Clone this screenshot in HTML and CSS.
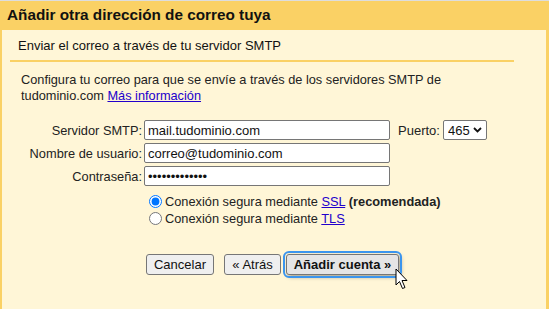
FILE: index.html
```html
<!DOCTYPE html>
<html lang="es">
<head>
  <meta charset="UTF-8" />
  <title>Añadir otra dirección de correo tuya</title>
  <link rel="stylesheet" href="styles.css">
</head>
<body>
  <div class="dialog">
    <h1>Añadir otra dirección de correo tuya</h1>

    <div class="panel">
      <div class="step">Enviar el correo a través de tu servidor SMTP</div>

      <div class="content">
        <p class="intro">
          Configura tu correo para que se envíe a través de los servidores SMTP de
          tudominio.com <a href="#">Más información</a>
        </p>

        <div class="form">
          <label for="server">Servidor SMTP:</label>
          <div class="field">
            <input type="text" id="server" value="mail.tudominio.com" />
            <label for="port" class="port-label">Puerto:</label>
            <span class="select-wrap">
              <select id="port">
                <option>465</option>
                <option>587</option>
                <option>25</option>
              </select>
              <svg class="chevron" width="9" height="6" viewBox="0 0 9 6">
                <path d="M1 1 L4.5 4.5 L8 1" fill="none" stroke="#111" stroke-width="1.8" />
              </svg>
            </span>
          </div>

          <label for="user">Nombre de usuario:</label>
          <div class="field">
            <input type="text" id="user" value="correo@tudominio.com" />
          </div>

          <label for="pass">Contraseña:</label>
          <div class="field">
            <input type="password" id="pass" value="micontraseña1" />
          </div>

          <div></div>
          <div class="options">
            <label class="radio"><input type="radio" name="sec" checked />Conexión segura mediante <a href="#">SSL</a> <b>(recomendada)</b></label>
            <label class="radio"><input type="radio" name="sec" />Conexión segura mediante <a href="#">TLS</a></label>
          </div>

          <div></div>
          <div class="actions">
            <button class="cancel">Cancelar</button>
            <button class="back">« Atrás</button>
            <button class="primary">Añadir cuenta »</button>
            <svg class="cursor" width="14" height="22" viewBox="0 0 14 22">
              <path d="M1 1 L1 17 L4.5 13.5 L7.5 20.5 L10 19.5 L7 12.5 L12 12.5 Z" fill="#fff" stroke="#000" stroke-width="1" stroke-linejoin="round" />
            </svg>
          </div>
        </div>
      </div>
    </div>
  </div>
</body>
</html>
```

FILE: styles.css
```css
* {
  box-sizing: border-box;
}

body {
  margin: 0;
  font-family: "Liberation Sans", Arial, sans-serif;
  font-size: 13px;
  color: #222;
  background: #fad165;
  border-top: 1px solid #ddd;
  height: 309px;
  overflow: hidden;
}

.dialog {
  display: flex;
  flex-direction: column;
  padding: 0 3px 0 2px;
  height: 100%;
}

.dialog h1 {
  margin: 0;
  height: 29px;
  padding: 5px 5px 0;
  font-size: 15.3px;
  font-weight: bold;
  color: #111;
}

.panel {
  flex: 1;
  background: #fff6d7;
  padding-top: 6px;
}

.step {
  margin: 0 32px 0 8px;
  padding: 2px 8px 0;
  height: 26px;
  border-bottom: 2px solid #fad165;
  color: #111;
}

.content {
  padding: 0 0 0 19px;
}

.intro {
  margin: 10px 20px 16px 0;
  line-height: 16px;
  font-size: 12.75px;
}

a {
  color: #2200cc;
}

.form {
  display: grid;
  grid-template-columns: 121px auto;
  column-gap: 2px;
  row-gap: 3px;
  align-items: center;
}

.form > label {
  text-align: right;
  font-size: 12.8px;
}

.field {
  display: flex;
  align-items: center;
}

input[type="text"],
input[type="password"] {
  width: 246px;
  height: 20px;
  margin: 0;
  padding: 1px 3px;
  border: 1px solid #767676;
  border-radius: 2px;
  background: #fff;
  font-family: inherit;
  font-size: 13px;
  color: #111;
}

.port-label {
  margin: 0 3px 0 8px;
}

.select-wrap {
  position: relative;
  display: inline-block;
}

select {
  appearance: none;
  display: block;
  height: 20px;
  width: 44px;
  font-family: inherit;
  font-size: 13px;
  border: 1px solid #767676;
  border-radius: 2px;
  background: #fff;
  color: #111;
  padding: 0 0 0 4px;
}

.chevron {
  position: absolute;
  right: 5px;
  top: 7px;
  pointer-events: none;
}

.options {
  padding-top: 3px;
  display: flex;
  flex-direction: column;
  font-size: 12.8px;
}

.radio input {
  margin: 3px 3px 0 5px;
  vertical-align: -2px;
}

.actions {
  position: relative;
  display: flex;
  align-items: center;
  margin-top: 25px;
  padding-left: 2px;
}

button {
  height: 21px;
  padding: 0;
  font-family: inherit;
  font-size: 13px;
  color: #111;
  background: #efefef;
  border: 1px solid #767676;
  border-radius: 3px;
}

.cancel {
  width: 68px;
  margin-right: 10px;
}

.back {
  width: 57px;
  margin-right: 5px;
}

.primary {
  font-weight: bold;
  width: 113px;
  background: #e5e5e5;
  box-shadow: 2px 2px 4px rgba(0, 0, 0, 0.35);
  outline: 2px solid #3b95ee;
  outline-offset: 1px;
}

.cursor {
  position: absolute;
  left: 251px;
  top: 14px;
}
```
